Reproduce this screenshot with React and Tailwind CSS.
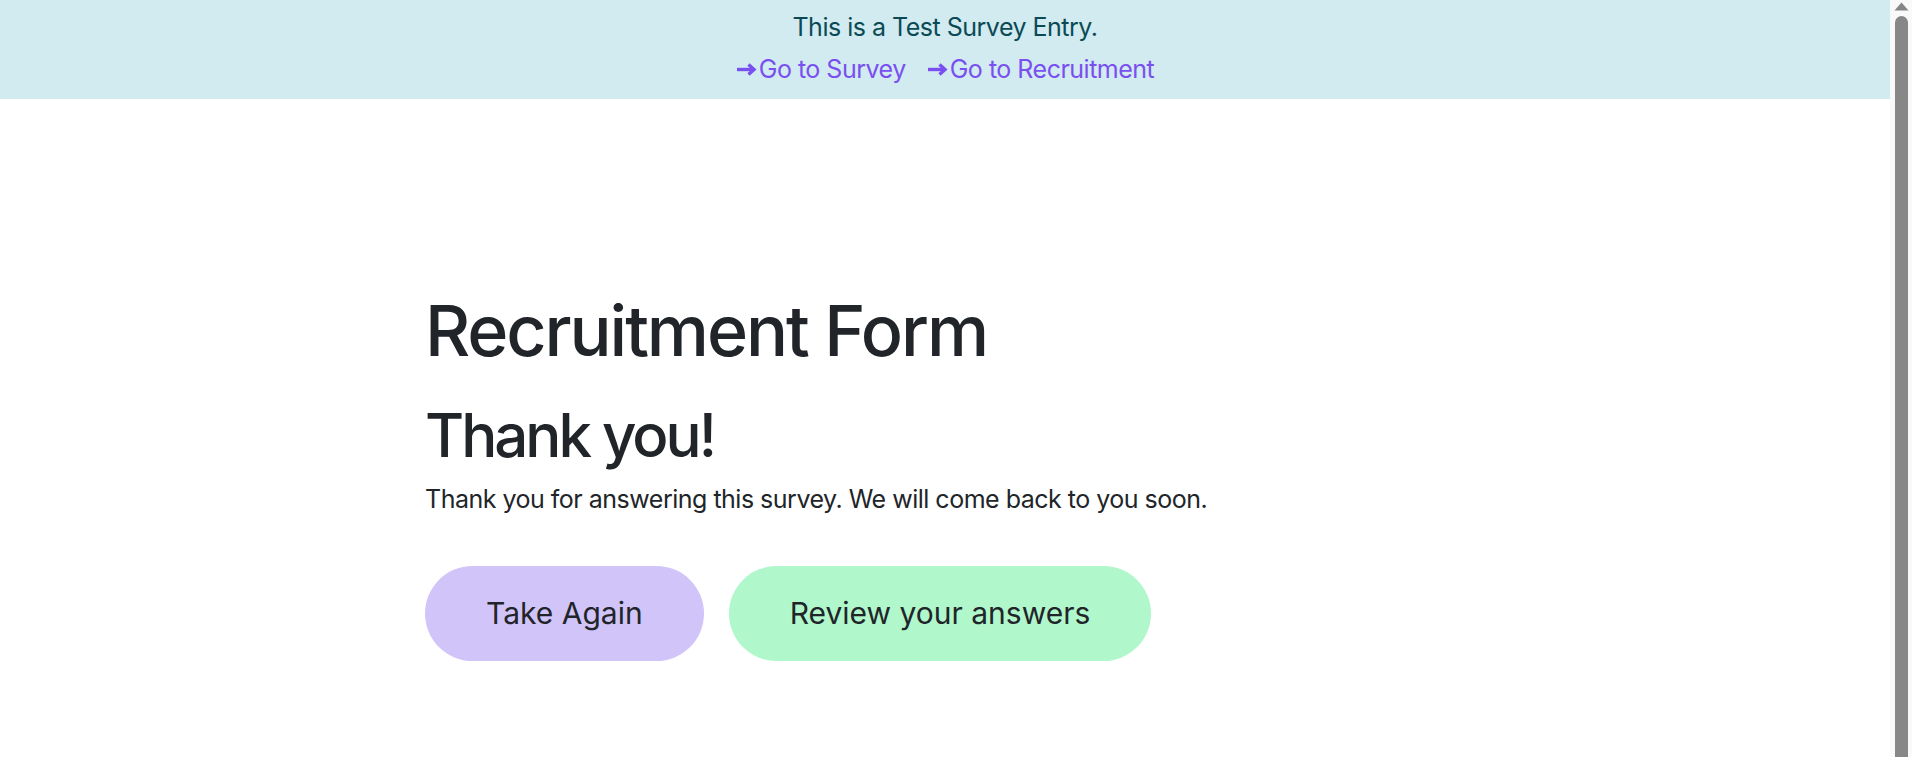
import React from "react";

function Arrow() {
  return (
    <svg width="21" height="13" viewBox="0 0 21 13" className="mr-[2px] shrink-0" aria-hidden="true">
      <path d="M1 6.5H18" stroke="currentColor" strokeWidth="3.4" fill="none" />
      <path d="M12.5 1.5L18 6.5L12.5 11.5" stroke="currentColor" strokeWidth="3.4" fill="none" strokeLinejoin="miter" />
    </svg>
  );
}

function Scrollbar() {
  return (
    <div className="flex w-[22px] shrink-0 flex-col items-center bg-[#f9f9f9]">
      <svg width="15" height="9" viewBox="0 0 15 9" className="mt-[2px]" aria-hidden="true">
        <path d="M7.5 0.5L14.5 8.5H0.5Z" fill="#858585" />
      </svg>
      <div className="mt-[5px] w-[13px] flex-1 rounded-t-full bg-[#878787]" />
    </div>
  );
}

export default function App() {
  return (
    <div className="flex h-screen overflow-hidden bg-white font-['Inter','Noto_Sans',sans-serif] text-[#212529]">
      <div className="min-w-0 flex-1">
        <div className="bg-[#d1ebf0] pt-[9px] pb-[11px] text-center text-[25px] leading-[1.5]">
          <p className="tracking-[-0.02em] text-[#0b4a55]">This is a Test Survey Entry.</p>
          <div className="mt-[4px] flex justify-center gap-[21px] tracking-[-0.02em] text-[#7a4ff0]">
            <a href="#" className="flex items-center">
              <Arrow />
              Go to Survey
            </a>
            <a href="#" className="flex items-center">
              <Arrow />
              Go to Recruitment
            </a>
          </div>
        </div>
        <main className="mx-auto w-[1040px] pt-[190px]">
          <h1 className="text-[70px] font-medium leading-[1.2] tracking-[-0.03em]">Recruitment Form</h1>
          <h2 className="mt-[26px] mb-[10px] text-[60px] font-medium leading-[1.2] tracking-[-0.05em]">
            Thank you!
          </h2>
          <p className="text-[25px] leading-[1.5] tracking-[-0.02em]">
            Thank you for answering this survey. We will come back to you soon.
          </p>
          <div className="mt-[47px] flex gap-[25px]">
            <button className="rounded-full bg-[#d1c4f9] px-[61px] py-[25px] text-[30px] leading-[1.5] text-[#212529]">
              Take Again
            </button>
            <button className="rounded-full bg-[#b0f7cb] px-[61px] py-[25px] text-[30px] leading-[1.5] text-[#212529]">
              Review your answers
            </button>
          </div>
        </main>
      </div>
      <Scrollbar />
    </div>
  );
}
